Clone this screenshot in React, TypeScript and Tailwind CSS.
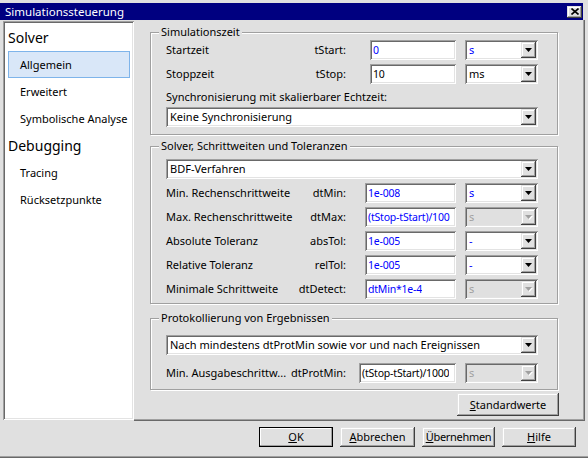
import React from 'react';

// classic 3D edges
const sunken =
  'shadow-[inset_1px_1px_0_#a0a0a0,inset_-1px_-1px_0_#ffffff,inset_2px_2px_0_#696969,inset_-2px_-2px_0_#e3e3e3]';
const raised =
  'shadow-[inset_-1px_-1px_0_#404040,inset_1px_1px_0_#e3e3e3,inset_-2px_-2px_0_#a0a0a0,inset_2px_2px_0_#ffffff]';
const etched = 'border border-[#a0a0a0] shadow-[inset_1px_1px_0_#ffffff,1px_1px_0_#ffffff]';

function Arrow({ disabled }: { disabled?: boolean }) {
  return (
    <svg width="8" height="5" viewBox="0 0 8 5">
      {disabled && <path d="M1 1h7L4.5 5z" fill="#ffffff" />}
      <path d="M0 0h7L3.5 4z" fill={disabled ? '#a0a0a0' : '#000000'} />
    </svg>
  );
}

function Combo({
  value,
  blue,
  disabled,
  className = '',
}: {
  value: string;
  blue?: boolean;
  disabled?: boolean;
  className?: string;
}) {
  const color = disabled ? 'text-[#a0a0a0]' : blue ? 'text-[#0000ff]' : 'text-black';
  return (
    <div className={`flex items-center h-[20px] ${disabled ? 'bg-[#e0e0e0]' : 'bg-white'} ${sunken} ${className}`}>
      <span className={`flex-1 pl-[4px] whitespace-nowrap overflow-hidden ${color}`}>{value}</span>
      <div className={`mr-[2px] w-[15px] h-[16px] flex items-center justify-center bg-[#e0e0e0] ${raised}`}>
        <Arrow disabled={disabled} />
      </div>
    </div>
  );
}

function Field({ value, blue, className = '' }: { value: string; blue?: boolean; className?: string }) {
  return (
    <div className={`flex items-center h-[20px] bg-white ${sunken} ${className}`}>
      <span
        className={`pl-[3px] whitespace-nowrap overflow-hidden text-[10.5px] tracking-[-0.2px] ${
          blue ? 'text-[#0000ff]' : 'text-black'
        }`}
      >
        {value}
      </span>
    </div>
  );
}

function Row({
  label,
  name,
  children,
}: {
  label: string;
  name: string;
  children: React.ReactNode;
}) {
  return (
    <div className="flex items-center h-[20px]">
      <div className="w-[180px] flex justify-between whitespace-nowrap">
        <span>{label}</span>
        <span>{name}</span>
      </div>
      {children}
    </div>
  );
}

function Group({ title, className = '', children }: { title: string; className?: string; children: React.ReactNode }) {
  return (
    <div className={`relative w-[408px] pl-[15px] pr-[19px] ${etched} ${className}`}>
      <span className="absolute -top-[8px] left-[8px] px-[2px] bg-[#e0e0e0] leading-[14px]">{title}</span>
      {children}
    </div>
  );
}

function Button({ children, def, className = '' }: { children: React.ReactNode; def?: boolean; className?: string }) {
  return (
    <div
      className={`flex items-center justify-center bg-[#e0e0e0] ${raised} ${
        def ? 'outline outline-1 outline-black -outline-offset-1' : ''
      } ${className}`}
    >
      {children}
    </div>
  );
}

const navItems = [
  { head: 'Solver' },
  { item: 'Allgemein', selected: true },
  { item: 'Erweitert' },
  { item: 'Symbolische Analyse' },
  { head: 'Debugging' },
  { item: 'Tracing' },
  { item: 'Rücksetzpunkte' },
];

export default function App() {
  return (
    <div className="w-[588px] h-[458px] overflow-hidden bg-[#e0e0e0] font-['Noto_Sans',sans-serif] text-[11px] leading-[14px] text-black flex flex-col">
      {/* title bar */}
      <div className="mt-[3px] mr-[5px] h-[17px] bg-[#000080] flex items-center justify-between pl-[5px] pr-[1px]">
        <span className="text-white text-[11.5px]">Simulationssteuerung</span>
        <div className={`w-[15px] h-[12px] flex items-center justify-center bg-[#e0e0e0] ${raised}`}>
          <svg width="8" height="7" viewBox="0 0 8 7">
            <path d="M0.5 0.5L7.5 6.5M7.5 0.5L0.5 6.5" stroke="#000000" strokeWidth="1.6" />
          </svg>
        </div>
      </div>

      {/* body */}
      <div className="flex h-[401px]">
        {/* navigation list */}
        <div className={`mt-[1px] ml-[3px] w-[131px] h-[399px] bg-white pt-[4px] pl-[5px] pr-[4px] ${sunken}`}>
          {navItems.map((n, i) =>
            n.head ? (
              <div
                key={i}
                className={`${i === 0 ? 'h-[26px]' : 'h-[27px]'} flex items-center text-[14px] leading-[16px]`}
              >
                {n.head}
              </div>
            ) : (
              <div
                key={i}
                className={`h-[27px] flex items-center pl-[11px] border ${
                  n.selected ? 'bg-[#d9e7f8] border-[#7eb4ea]' : 'border-transparent'
                }`}
              >
                {n.item}
              </div>
            )
          )}
        </div>

        {/* settings page */}
        <div className="mr-[3px] flex-1 pl-[16px] pt-[12px] flex flex-col shadow-[inset_-1px_-1px_0_#696969,inset_-2px_-2px_0_#a0a0a0]">
          <Group title="Simulationszeit" className="pt-[7px] pb-[7px]">
            <Row label="Startzeit" name="tStart:">
              <Field value="0" blue className="ml-[24px] w-[86px]" />
              <Combo value="s" blue className="ml-[9px] w-[73px]" />
            </Row>
            <div className="mt-[4px]">
              <Row label="Stoppzeit" name="tStop:">
                <Field value="10" className="ml-[24px] w-[86px]" />
                <Combo value="ms" className="ml-[9px] w-[73px]" />
              </Row>
            </div>
            <div className="mt-[6px] h-[14px]">Synchronisierung mit skalierbarer Echtzeit:</div>
            <Combo value="Keine Synchronisierung" className="mt-[3px]" />
          </Group>

          <Group title="Solver, Schrittweiten und Toleranzen" className="mt-[11px] pt-[12px] pb-[4px]">
            <Combo value="BDF-Verfahren" />
            <div className="mt-[4px] flex flex-col gap-[4px]">
              <Row label="Min. Rechenschrittweite" name="dtMin:">
                <Field value="1e-008" blue className="ml-[19px] w-[91px]" />
                <Combo value="s" blue className="ml-[9px] w-[73px]" />
              </Row>
              <Row label="Max. Rechenschrittweite" name="dtMax:">
                <Field value="(tStop-tStart)/100" blue className="ml-[19px] w-[91px]" />
                <Combo value="s" disabled className="ml-[9px] w-[73px]" />
              </Row>
              <Row label="Absolute Toleranz" name="absTol:">
                <Field value="1e-005" blue className="ml-[19px] w-[91px]" />
                <Combo value="-" blue className="ml-[9px] w-[73px]" />
              </Row>
              <Row label="Relative Toleranz" name="relTol:">
                <Field value="1e-005" blue className="ml-[19px] w-[91px]" />
                <Combo value="-" blue className="ml-[9px] w-[73px]" />
              </Row>
              <Row label="Minimale Schrittweite" name="dtDetect:">
                <Field value="dtMin*1e-4" blue className="ml-[19px] w-[91px]" />
                <Combo value="s" disabled className="ml-[9px] w-[73px]" />
              </Row>
            </div>
          </Group>

          <Group title="Protokollierung von Ergebnissen" className="mt-[14px] pt-[16px] pb-[6px]">
            <Combo value="Nach mindestens dtProtMin sowie vor und nach Ereignissen" />
            <div className="mt-[8px]">
              <Row label="Min. Ausgabeschrittw..." name="dtProtMin:">
                <Field value="(tStop-tStart)/1000" className="ml-[13px] w-[97px]" />
                <Combo value="s" disabled className="ml-[9px] w-[73px]" />
              </Row>
            </div>
          </Group>

          <div className="w-[409px] mt-[3px] flex justify-end">
            <Button className="w-[102px] h-[23px]">
              <span>
                <u>S</u>tandardwerte
              </span>
            </Button>
          </div>
        </div>
      </div>

      {/* dialog buttons */}
      <div className="mt-[6px] h-[20px] flex justify-end gap-[7px] pr-[12px]">
        <Button def className="w-[74px] h-[20px]">
          <span>
            <u>O</u>K
          </span>
        </Button>
        <Button className="w-[75px] h-[20px]">
          <span>
            <u>A</u>bbrechen
          </span>
        </Button>
        <Button className="w-[73px] h-[20px]">
          <span className="tracking-[-0.3px]">
            <u>Ü</u>bernehmen
          </span>
        </Button>
        <Button className="w-[74px] h-[20px]">
          <span>
            <u>H</u>ilfe
          </span>
        </Button>
      </div>

      <div className="mt-[9px] h-[2px] border-t border-[#a0a0a0] bg-[#696969]" />
    </div>
  );
}
